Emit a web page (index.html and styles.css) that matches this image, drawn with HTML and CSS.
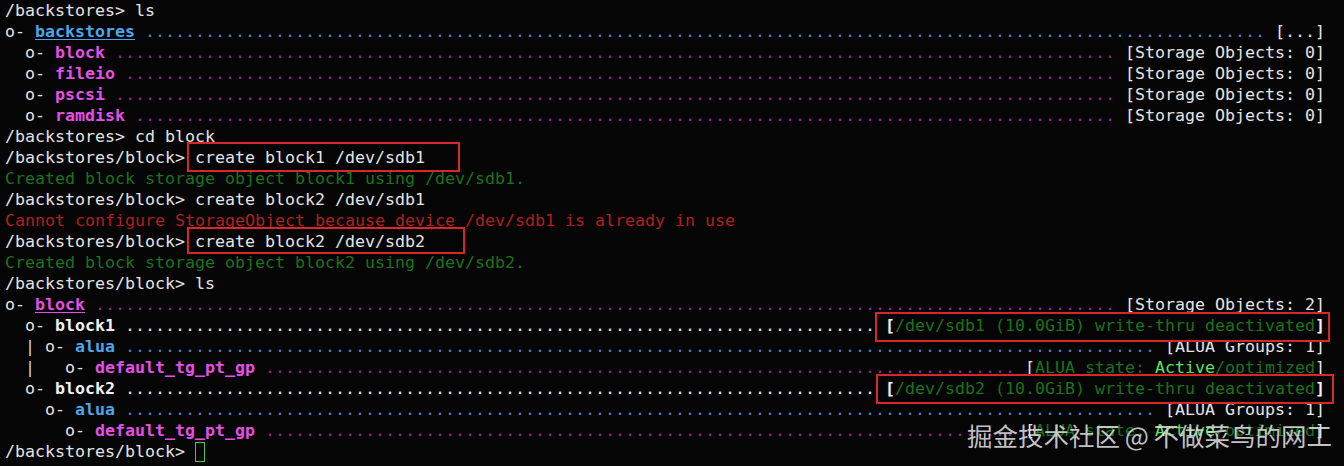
FILE: index.html
```html
<!DOCTYPE html>
<html>
<head>
<meta charset="utf-8">
<link rel="stylesheet" href="styles.css">
</head>
<body>
<div class="term">
<div class="ln">/backstores&gt; ls</div>
<div class="ln">o- <span class="b u">backstores</span> <span class="db">................................................................................................................</span> [...]</div>
<div class="ln">  o- <span class="m">block</span> <span class="dm">....................................................................................................</span> [Storage Objects: 0]</div>
<div class="ln">  o- <span class="m">fileio</span> <span class="dm">...................................................................................................</span> [Storage Objects: 0]</div>
<div class="ln">  o- <span class="m">pscsi</span> <span class="dm">....................................................................................................</span> [Storage Objects: 0]</div>
<div class="ln">  o- <span class="m">ramdisk</span> <span class="dm">..................................................................................................</span> [Storage Objects: 0]</div>
<div class="ln">/backstores&gt; cd block</div>
<div class="ln">/backstores/block&gt; <span class="mark">create block1 /dev/sdb1<span class="box box1"></span></span></div>
<div class="ln g">Created block storage object block1 using /dev/sdb1.</div>
<div class="ln">/backstores/block&gt; create block2 /dev/sdb1</div>
<div class="ln r">Cannot configure StorageObject because device /dev/sdb1 is already in use</div>
<div class="ln">/backstores/block&gt; <span class="mark">create block2 /dev/sdb2<span class="box box2"></span></span></div>
<div class="ln g">Created block storage object block2 using /dev/sdb2.</div>
<div class="ln">/backstores/block&gt; ls</div>
<div class="ln">o- <span class="m u">block</span> <span class="dm">......................................................................................................</span> [Storage Objects: 2]</div>
<div class="ln">  o- <span class="wb">block1</span> <span class="dw">...........................................................................</span> <span class="mark"><span class="wb">[</span><span class="g">/dev/sdb1 (10.0GiB) write-thru deactivated</span><span class="wb">]</span><span class="box box3"></span></span></div>
<div class="ln">  <span class="w">|</span> o- <span class="b">alua</span> <span class="db">.......................................................................................................</span> [ALUA Groups: 1]</div>
<div class="ln">  <span class="w">|</span>   o- <span class="m">default_tg_pt_gp</span> <span class="dm">...........................................................................</span> [<span class="g">ALUA state: </span><span class="gb">Active</span><span class="g">/optimized</span>]</div>
<div class="ln">  o- <span class="wb">block2</span> <span class="dw">...........................................................................</span> <span class="mark"><span class="wb">[</span><span class="g">/dev/sdb2 (10.0GiB) write-thru deactivated</span><span class="wb">]</span><span class="box box4"></span></span></div>
<div class="ln">    o- <span class="b">alua</span> <span class="db">.......................................................................................................</span> [ALUA Groups: 1]</div>
<div class="ln">      o- <span class="m">default_tg_pt_gp</span> <span class="dm">...........................................................................</span> [<span class="g">ALUA state: </span><span class="gb">Active</span><span class="g">/optimized</span>]</div>
<div class="ln">/backstores/block&gt; <span class="cursor"></span></div>
</div>
<div class="watermark">掘金技术社区 @ 不做菜鸟的网工</div>
</body>
</html>
```
FILE: styles.css
```css
html, body {
  margin: 0;
  padding: 0;
  background: #050505;
}
body {
  position: relative;
  width: 1344px;
  height: 466px;
  overflow: hidden;
}
.term {
  padding: 0 5px;
  font-family: "DejaVu Sans Mono", monospace;
  font-size: 16.61px;
  line-height: 21px;
  color: #e4e4e4;
}
.ln {
  height: 21px;
  white-space: pre;
}
.b { color: #4ea6ea; font-weight: bold; }
.m { color: #e64fe6; font-weight: bold; }
.wb { color: #f2f2f2; font-weight: bold; }
.w { color: #d8d8d8; }
.u { text-decoration: underline; text-underline-offset: 2px; }
.g { color: #1b731b; }
.gb { color: #5ee25e; }
.r { color: #b51d1d; }
.db { color: #4a86d6; }
.dm { color: #9a2a98; }
.dw { color: #e6e6e6; }
.mark {
  position: relative;
  display: inline-block;
  height: 21px;
  vertical-align: top;
}
.box {
  position: absolute;
  box-sizing: border-box;
  border: 2.5px solid #d8262b;
}
.box1 { top: -5px; bottom: -4px; left: -8px; right: -35px; }
.box2 { top: -4px; bottom: -2px; left: -8px; right: -40px; }
.box3 { top: -3px; bottom: -6px; left: -10px; right: -5px; }
.box4 { top: -4px; bottom: -5px; left: -9px; right: -9px; }
.cursor {
  display: inline-block;
  box-sizing: border-box;
  width: 10px;
  height: 20px;
  border: 1.5px solid #4fc24f;
  vertical-align: -5px;
}
.watermark {
  position: absolute;
  left: 967px;
  top: 422px;
  font-family: "Noto Sans CJK SC", sans-serif;
  font-size: 25.5px;
  line-height: 26px;
  word-spacing: -1px;
  color: rgba(222, 222, 222, 0.88);
  white-space: nowrap;
}
```
